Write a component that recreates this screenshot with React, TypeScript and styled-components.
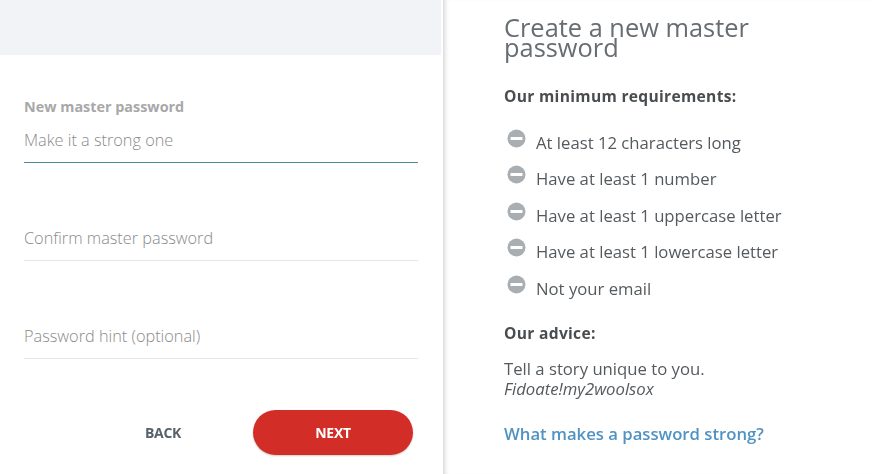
import React, { useState } from "react";
import styled, { createGlobalStyle } from "styled-components";

const GlobalStyle = createGlobalStyle`
  html, body {
    margin: 0;
    padding: 0;
    background: #ffffff;
    font-family: "Open Sans", "Liberation Sans", sans-serif;
  }
`;

const Page = styled.div`
  display: flex;
  width: 872px;
  height: 474px;
  overflow: hidden;
`;

const FormPanel = styled.div`
  width: 443px;
  flex-shrink: 0;
  display: flex;
  flex-direction: column;
  background: #ffffff;
`;

const TopBand = styled.div`
  height: 55px;
  margin-right: 2px;
  background: #f2f3f6;
`;

const Form = styled.form`
  display: flex;
  flex-direction: column;
  gap: 53px;
  padding: 42px 25px 0 24px;
`;

const Field = styled.div`
  display: flex;
  flex-direction: column;
  gap: 1px;
`;

const Label = styled.label`
  font-size: 14.4px;
  line-height: 20px;
  font-weight: 700;
  color: #a8a8a8;
`;

const Input = styled.input<{ $active?: boolean }>`
  height: 45px;
  box-sizing: border-box;
  padding: 0 0 1px;
  border: none;
  border-bottom: 1px solid ${(p) => (p.$active ? "#4d88a2" : "#e6e6e6")};
  outline: none;
  background: transparent;
  font-family: inherit;
  font-size: 16.3px;
  font-weight: 300;
  color: #555;
  caret-color: #222;

  &::placeholder {
    color: #8a8a8a;
  }
`;

const Actions = styled.div`
  display: flex;
  justify-content: flex-end;
  gap: 10px;
  padding: 51px 30px 0 0;
`;

const Button = styled.button<{ $primary?: boolean }>`
  width: 160px;
  height: 45px;
  border: none;
  border-radius: 23px;
  font-family: inherit;
  font-size: 14px;
  font-weight: 700;
  letter-spacing: -0.3px;
  cursor: pointer;
  background: ${(p) => (p.$primary ? "#d32d27" : "transparent")};
  color: ${(p) => (p.$primary ? "#ffffff" : "#56616a")};
  box-shadow: ${(p) => (p.$primary ? "0 1px 2px rgba(0,0,0,0.2)" : "none")};
`;

const InfoPanel = styled.div`
  flex: 1;
  padding: 17px 0 0 61px;
  box-shadow: inset 5px 0 4px -3px rgba(0, 0, 0, 0.16);
  color: #4a4a4a;
`;

const Heading = styled.h1`
  width: 290px;
  margin: 0 0 29px;
  font-size: 25.4px;
  line-height: 20px;
  font-weight: 400;
  color: #686d72;
`;

const SubHeading = styled.h2`
  margin: 0;
  font-size: 15.6px;
  line-height: 20px;
  font-weight: 700;
  letter-spacing: 0.3px;
  color: #4a4d50;
`;

const Requirements = styled.ul`
  list-style: none;
  margin: 25px 0 24px;
  padding: 0;
  display: flex;
  flex-direction: column;
  gap: 14.5px;
`;

const Requirement = styled.li`
  display: flex;
  align-items: center;
  gap: 10px;
  height: 22px;
  font-size: 16.7px;
  color: #555a5e;
`;

const StatusIcon = styled.svg`
  width: 19px;
  height: 19px;
  flex-shrink: 0;
  margin: -8px 0 0 3px;
`;

const Advice = styled.p`
  margin: 16px 0 0;
  font-size: 16.7px;
  line-height: 20px;
  color: #555a5e;
`;

const Example = styled.span`
  display: block;
  font-style: italic;
`;

const HelpLink = styled.a`
  display: inline-block;
  margin-top: 23px;
  font-size: 16.7px;
  font-weight: 600;
  color: #5092c2;
  text-decoration: none;
`;

const requirements = [
  "At least 12 characters long",
  "Have at least 1 number",
  "Have at least 1 uppercase letter",
  "Have at least 1 lowercase letter",
  "Not your email",
];

const MinusIcon = () => (
  <StatusIcon viewBox="0 0 19 19">
    <circle cx="9.5" cy="9.5" r="9" fill="#a9aeb3" />
    <rect x="3.5" y="8" width="12" height="3" rx="0.5" fill="#ffffff" />
  </StatusIcon>
);

const App = () => {
  const [password, setPassword] = useState("");

  return (
    <>
      <GlobalStyle />
      <Page>
        <FormPanel>
          <TopBand />
          <Form onSubmit={(e) => e.preventDefault()}>
            <Field>
              <Label htmlFor="master">New master password</Label>
              <Input
                id="master"
                type="password"
                $active
                autoFocus
                placeholder="Make it a strong one"
                value={password}
                onChange={(e) => setPassword(e.target.value)}
              />
            </Field>
            <Field>
              <Input type="password" placeholder="Confirm master password" />
            </Field>
            <Field>
              <Input type="text" placeholder="Password hint (optional)" />
            </Field>
          </Form>
          <Actions>
            <Button type="button">BACK</Button>
            <Button type="button" $primary>
              NEXT
            </Button>
          </Actions>
        </FormPanel>
        <InfoPanel>
          <Heading>Create a new master password</Heading>
          <SubHeading>Our minimum requirements:</SubHeading>
          <Requirements>
            {requirements.map((item) => (
              <Requirement key={item}>
                <MinusIcon />
                {item}
              </Requirement>
            ))}
          </Requirements>
          <SubHeading>Our advice:</SubHeading>
          <Advice>
            Tell a story unique to you.
            <Example>Fidoate!my2woolsox</Example>
          </Advice>
          <HelpLink href="#">What makes a password strong?</HelpLink>
        </InfoPanel>
      </Page>
    </>
  );
};

export default App;
